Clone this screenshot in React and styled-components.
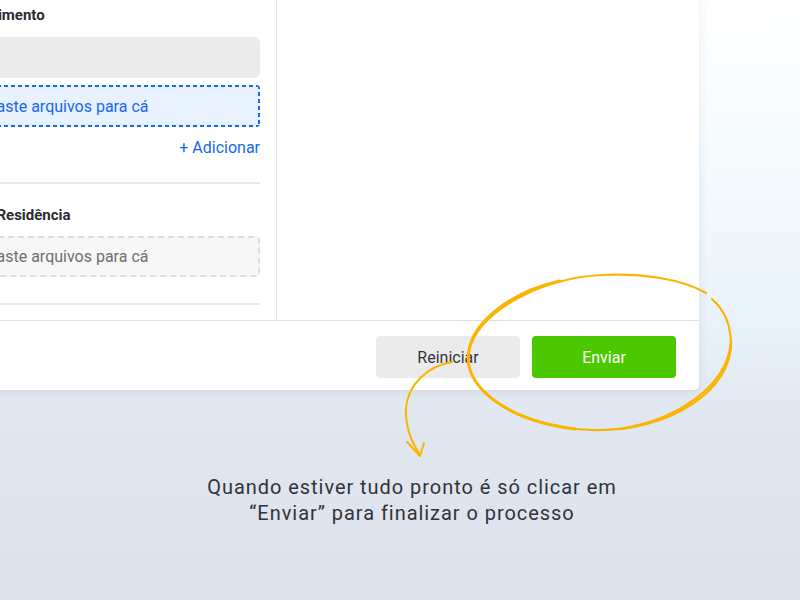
import styled, { createGlobalStyle, css } from 'styled-components';

const GlobalStyle = createGlobalStyle`
  html, body {
    margin: 0;
    padding: 0;
  }
  body {
    font-family: Roboto, 'Liberation Sans', sans-serif;
  }
`;

const Page = styled.div`
  position: relative;
  width: 800px;
  height: 600px;
  overflow: hidden;
  background: linear-gradient(
    180deg,
    #ffffff 0%,
    #f3fafd 30%,
    #eaf3fb 52%,
    #e1e8f1 68%,
    #dbe2eb 100%
  );
`;

const Card = styled.div`
  width: 851px;
  margin: -16px 0 0 -152px;
  background: #fff;
  border-radius: 0 0 5px 5px;
  box-shadow: 0 2px 10px rgba(40, 60, 90, 0.1);
`;

const Body = styled.div`
  display: grid;
  grid-template-columns: 429px 1fr;
`;

const Column = styled.div`
  padding: 21px 16px 15px;
  border-right: 1px solid #e4e4e4;
`;

const Section = styled.div`
  display: flex;
  flex-direction: column;
`;

const Title = styled.div`
  font-size: 15px;
  line-height: 20px;
  font-weight: 700;
  color: #2b2b33;
  padding-left: 18px;
  margin-top: ${(p) => p.$gap || 0}px;
`;

const FilledInput = styled.div`
  height: 41px;
  margin-top: 12px;
  border-radius: 6px;
  background: #ebebeb;
`;

const activeBorder = css`
  border: 0;
  background:
    linear-gradient(90deg, #1767f2 4px, transparent 0) top left / 7px 2px repeat-x,
    linear-gradient(90deg, #1767f2 4px, transparent 0) bottom left / 7px 2px repeat-x,
    linear-gradient(180deg, #1767f2 4px, transparent 0) top right / 2px 7px repeat-y,
    linear-gradient(180deg, #1767f2 4px, transparent 0) top left / 2px 7px repeat-y,
    #e8f1fe;
`;

const DropZone = styled.div`
  height: ${(p) => (p.$active ? 42 : 41)}px;
  margin-top: ${(p) => (p.$active ? 7 : 11)}px;
  box-sizing: border-box;
  display: flex;
  align-items: center;
  justify-content: center;
  border-radius: 4px;
  font-size: 16px;
  background: #f7f7f7;
  border: 2px dashed #dedede;
  color: ${(p) => (p.$active ? '#1767f2' : '#6f6f6f')};
  ${(p) => p.$active && activeBorder}
`;

const AddLink = styled.a`
  align-self: flex-end;
  margin-top: 11px;
  font-size: 16px;
  line-height: 20px;
  color: #1767f2;
  text-decoration: none;
`;

const Divider = styled.hr`
  border: 0;
  height: 2px;
  background: #e8e8e8;
  margin: ${(p) => p.$gap}px 0 0;
`;

const Footer = styled.div`
  height: 70px;
  border-top: 1px solid #e0e0e0;
  display: flex;
  align-items: center;
  justify-content: flex-end;
  gap: 12px;
  padding: 3px 23px 0 0;
  box-sizing: border-box;
`;

const Button = styled.button`
  width: 144px;
  height: 42px;
  border: 0;
  border-radius: 4px;
  font-family: Roboto, 'Liberation Sans', sans-serif;
  font-size: 16px;
  background: ${(p) => (p.$primary ? '#4bc800' : '#ebebeb')};
  color: ${(p) => (p.$primary ? '#ffffff' : '#33333b')};
`;

const Caption = styled.p`
  margin: 84px 0 0 24px;
  text-align: center;
  font-size: 20px;
  line-height: 26px;
  letter-spacing: 0.95px;
  color: #333338;
`;

const Annotation = styled.svg`
  position: absolute;
  left: 0;
  top: 0;
  pointer-events: none;
`;

export default function App() {
  return (
    <>
      <GlobalStyle />
      <Page>
        <Card>
          <Body>
            <Column>
              <Section>
                <Title>Certidão de Nascimento</Title>
                <FilledInput />
                <DropZone $active>Arraste arquivos para cá</DropZone>
                <AddLink href="#">+ Adicionar</AddLink>
                <Divider $gap={24} />
                <Title $gap={21}>Comprovante de Residência</Title>
                <DropZone>Arraste arquivos para cá</DropZone>
                <Divider $gap={26} />
              </Section>
            </Column>
            <div />
          </Body>
          <Footer>
            <Button>Reiniciar</Button>
            <Button $primary>Enviar</Button>
          </Footer>
        </Card>
        <Caption>
          Quando estiver tudo pronto é só clicar em
          <br />
          “Enviar” para finalizar o processo
        </Caption>
        <Annotation width="800" height="600" viewBox="0 0 800 600">
          <g fill="none" stroke="#fbb400" strokeLinecap="round">
            <path
              d="M 706 293 C 682 279 642 273 602 275 C 542 278 480 310 469 350 C 460 390 520 428 592 430 C 670 432 732 390 731 342 C 730 322 724 310 712 299"
              strokeWidth="2.2"
            />
            <path
              d="M 560 281 C 510 292 474 322 469 350 C 462 386 505 420 575 429"
              strokeWidth="3"
            />
            <path
              d="M 620 429 C 680 420 728 384 731 342"
              strokeWidth="2.6"
            />
            <path
              d="M 452 362 C 428 366 408 384 406 408 C 405 428 412 443 420 455"
              strokeWidth="2"
            />
            <path d="M 407 442 L 420 456 L 424 443" strokeWidth="2" strokeLinejoin="round" />
          </g>
        </Annotation>
      </Page>
    </>
  );
}
